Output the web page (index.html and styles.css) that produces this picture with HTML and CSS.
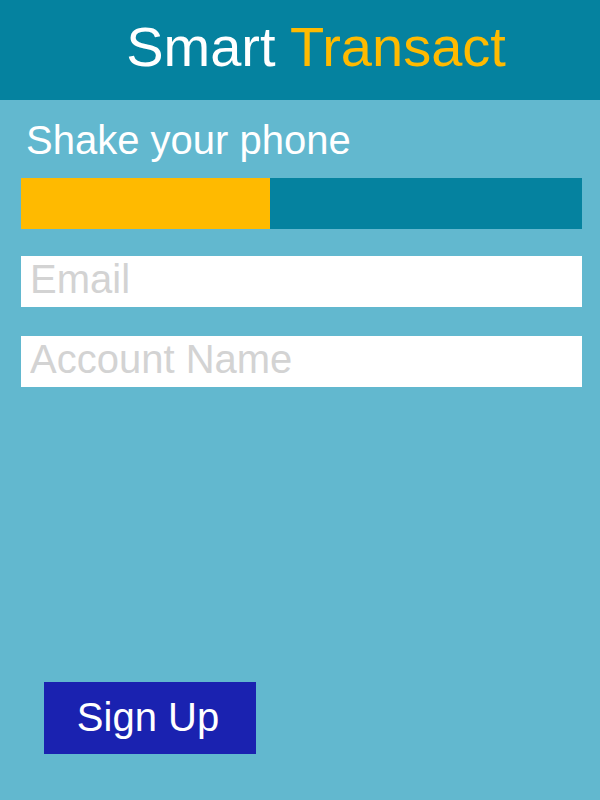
FILE: index.html
```html
<!DOCTYPE html>
<html>
<head>
<meta charset="utf-8">
<link rel="stylesheet" href="styles.css">
</head>
<body>
<div class="app">
  <header class="header">
    <h1 class="title"><span class="smart">Smart</span> <span class="transact">Transact</span></h1>
  </header>
  <main class="main">
    <div class="prompt">Shake your phone</div>
    <div class="progress"><div class="progress-fill" style="width:44.4%"></div></div>
    <input class="field field-email" type="text" placeholder="Email">
    <input class="field field-account" type="text" placeholder="Account Name">
    <div class="actions">
      <button class="signup">Sign Up</button>
    </div>
  </main>
</div>
</body>
</html>
```
FILE: styles.css
```css
html, body {
  margin: 0;
  padding: 0;
}
body {
  background: #62b8cf;
  font-family: "Liberation Sans", Arial, sans-serif;
}
.app {
  width: 600px;
  height: 800px;
  display: flex;
  flex-direction: column;
}
.header {
  height: 100px;
  background: #05829f;
  display: flex;
  align-items: center;
  justify-content: center;
  box-sizing: border-box;
  padding: 0 0 8px 32px;
  flex-shrink: 0;
}
.title {
  margin: 0;
  font-size: 56px;
  font-weight: normal;
  white-space: nowrap;
}
.smart { color: #ffffff; }
.transact { color: #ffba00; }
.main {
  flex: 1;
  display: flex;
  flex-direction: column;
  padding: 18px 18px 46px 21px;
}
.prompt {
  color: #ffffff;
  font-size: 40px;
  padding-left: 5px;
  line-height: 44px;
}
.progress {
  margin-top: 16px;
  height: 51px;
  background: #05829f;
  display: flex;
}
.progress-fill {
  background: #ffba00;
  height: 100%;
}
.field {
  display: block;
  width: 100%;
  height: 51px;
  box-sizing: border-box;
  border: none;
  outline: none;
  background: #ffffff;
  font-family: "Liberation Sans", Arial, sans-serif;
  font-size: 40px;
  color: #333;
  padding: 0 0 5px 9px;
  margin: 0;
}
.field::placeholder {
  color: #d3d3d3;
}
.field-email { margin-top: 27px; }
.field-account { margin-top: 29px; }
.actions {
  margin-top: auto;
  padding-left: 23px;
}
.signup {
  width: 212px;
  height: 72px;
  background: #1a22b0;
  color: #ffffff;
  border: none;
  font-family: "Liberation Sans", Arial, sans-serif;
  font-size: 40px;
  padding: 0 4px 2px 0;
}
```
